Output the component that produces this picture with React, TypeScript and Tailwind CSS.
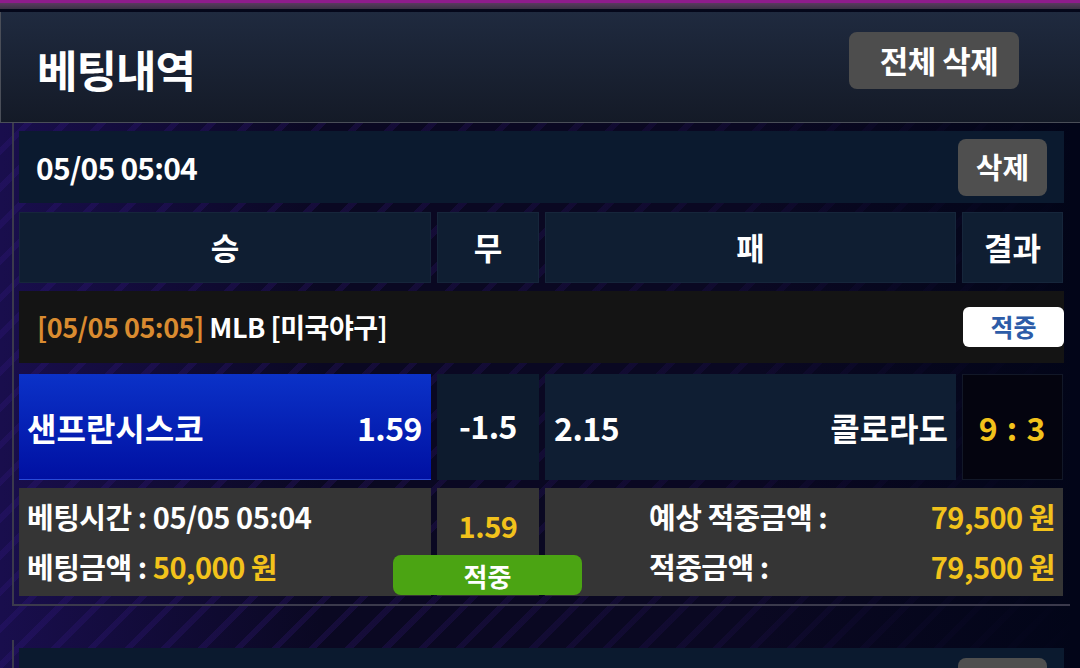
import React from "react";

const cols = "grid grid-cols-[412px_102px_411px_101px] gap-x-[6px]";

function Card({ children }: { children?: React.ReactNode }) {
  return (
    <div className="ml-[12px] w-[1058px] border-l-2 border-b-2 border-[#3b3a4c] pt-[8px] pl-[5px] pr-[6px] pb-[8px]">
      {children}
    </div>
  );
}

export default function App() {
  return (
    <div
      className="w-[1080px] h-[668px] overflow-hidden relative text-white bg-[#0a0822]"
      style={{ fontFamily: '"Noto Sans CJK KR", "Noto Sans", sans-serif' }}
    >
      {/* background streaks */}
      <div className="absolute inset-0 bg-[repeating-linear-gradient(135deg,rgba(90,40,200,0.18)_0px,rgba(90,40,200,0.18)_6px,transparent_6px,transparent_26px)]" />
      <div className="absolute inset-0 bg-[linear-gradient(90deg,rgba(40,20,120,0.5)_0%,rgba(10,8,34,0.2)_30%,rgba(10,8,34,0.6)_70%,rgba(2,5,24,1)_100%)]" />
      <div className="absolute right-0 top-0 w-[10px] h-full bg-[#020518]" />

      <div className="relative">
        {/* top strip */}
        <div className="h-[3px] bg-[#8e1c8c]" />
        <div className="h-[6px] bg-[linear-gradient(180deg,#5a3a60,#3a3245)]" />
        <div className="h-[3px] bg-[#04071a]" />

        {/* header */}
        <div className="h-[111px] bg-[linear-gradient(180deg,#1f2a3f,#141a27)] border-l border-b border-[#4a4e58] flex justify-between pl-[36px] pr-[61px]">
          <div className="pt-[27px] text-[44px] font-bold leading-[60px] tracking-[-1px]">베팅내역</div>
          <div className="pt-[20px]">
            <div className="w-[170px] h-[57px] rounded-[8px] bg-[#4d4d4d] flex items-center justify-center pl-[10px] text-[31px] font-bold tracking-[-0.5px]">
              전체 삭제
            </div>
          </div>
        </div>

        <Card>
          {/* date row */}
          <div className="h-[72px] bg-[#0b1a2f] flex items-center justify-between pl-[17px] pr-[17px]">
            <div className="text-[30px] font-semibold tracking-[-0.8px]">05/05 05:04</div>
            <div className="w-[89px] h-[57px] rounded-[8px] bg-[#4f4f4f] flex items-center justify-center text-[29px] font-bold">
              삭제
            </div>
          </div>

          {/* header row */}
          <div className={`${cols} mt-[9px] h-[71px]`}>
            {["승", "무", "패", "결과"].map((t) => (
              <div key={t} className="bg-[#0f1e32] border border-[#16263b] flex items-center justify-center text-[31px] font-bold">
                {t}
              </div>
            ))}
          </div>

          {/* league row */}
          <div className="mt-[8px] h-[72px] bg-[#141414] flex items-center justify-between pl-[18px]">
            <div className="text-[27px] font-semibold tracking-[-0.5px]">
              <span className="text-[#d98b30]">[05/05 05:05]</span> MLB [미국야구]
            </div>
            <div className="w-[101px] h-[40px] rounded-[6px] bg-white flex items-center justify-center text-[25px] font-bold text-[#2d5ca8]">
              적중
            </div>
          </div>

          {/* match row */}
          <div className={`${cols} mt-[11px] h-[106px]`}>
            <div className="bg-[linear-gradient(180deg,#0b32c8,#0010a2)] border-b border-[#2a4ad8] flex items-center justify-between pl-[8px] pr-[9px] text-[32px] font-semibold">
              <span>샌프란시스코</span>
              <span className="tracking-[-0.5px]">1.59</span>
            </div>
            <div className="bg-[#0d1b2e] flex items-center justify-center text-[32px] font-semibold pb-[4px] tracking-[-0.5px]">-1.5</div>
            <div className="bg-[#0f1e33] flex items-center justify-between pl-[9px] pr-[8px] text-[32px] font-semibold">
              <span className="tracking-[-0.5px]">2.15</span>
              <span>콜로라도</span>
            </div>
            <div className="bg-[#04040f] border border-[#121828] flex items-center justify-center text-[32px] font-semibold text-[#f2c21b] tracking-[1px]">
              9 : 3
            </div>
          </div>

          {/* info row */}
          <div className="relative mt-[8px] h-[108px] grid grid-cols-[412px_102px_518px] gap-x-[6px]">
            <div className="bg-[#353535] flex flex-col justify-center pl-[8px] gap-[12px] pb-[2px] text-[29px] font-semibold leading-[38px] tracking-[-0.5px]">
              <div>베팅시간 : 05/05 05:04</div>
              <div>
                베팅금액 : <span className="text-[#f2c21b]">50,000 원</span>
              </div>
            </div>
            <div className="bg-[#353535] flex justify-center pt-[16px] text-[29px] font-semibold text-[#f2c21b] tracking-[-0.5px]">
              1.59
            </div>
            <div className="bg-[#353535] flex flex-col justify-center pl-[104px] pr-[8px] gap-[12px] pb-[2px] text-[29px] font-semibold leading-[38px] tracking-[-0.5px]">
              <div className="flex justify-between">
                <span>예상 적중금액 :</span>
                <span className="text-[#f2c21b]">79,500 원</span>
              </div>
              <div className="flex justify-between">
                <span>적중금액 :</span>
                <span className="text-[#f2c21b]">79,500 원</span>
              </div>
            </div>
            <div className="absolute left-[374px] top-[67px] w-[189px] h-[40px] rounded-[8px] bg-[#4ba413] flex items-center justify-center text-[26px] font-bold">
              적중
            </div>
          </div>
        </Card>

        <div className="mt-[34px]">
          <Card>
            <div className="h-[72px] bg-[#0b1a2f] flex items-start justify-end pt-[10px] pr-[17px]">
              <div className="w-[89px] h-[57px] rounded-[8px] bg-[#4f4f4f]" />
            </div>
          </Card>
        </div>
      </div>
    </div>
  );
}
